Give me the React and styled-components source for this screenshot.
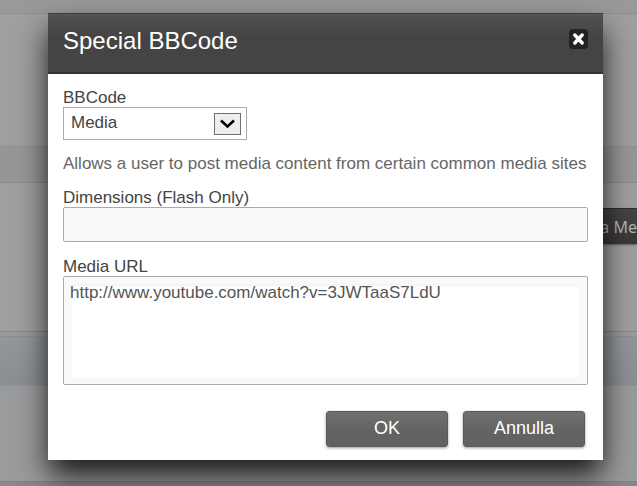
import React, { useState } from 'react'
import styled, { createGlobalStyle } from 'styled-components'

const GlobalStyle = createGlobalStyle`
    * {
        box-sizing: border-box;
    }
    body {
        margin: 0;
        font-family: "Liberation Sans", Arial, sans-serif;
        font-size: 17px;
        line-height: 18px;
        color: #444;
    }
`
const Screen = styled.div`
    display: grid;
    min-height: 100vh;
    overflow: hidden;
    background-color: #8a8888;
`
const Page = styled.div`
    grid-area: 1 / 1;
    min-width: 0;
`
const Band = styled.div`
    height: ${props => props.$height}px;
    background: ${props => props.$color};
    border-bottom: 1px solid ${props => props.$line};
`
const PageActions = styled.div`
    display: flex;
    justify-content: flex-end;
    padding-top: 25px;
`
const PageButton = styled.button`
    height: 36px;
    padding: 0 0 0 12px;
    border: none;
    border-top: 1px solid #2c2c2c;
    background: linear-gradient(#444, #383838);
    box-shadow: 0 1px 2px rgba(0, 0, 0, 0.4);
    color: #b4b4b4;
    font-family: "Noto Sans", "DejaVu Sans", sans-serif;
    font-size: 16px;
    white-space: nowrap;
`
const Dialog = styled.form`
    grid-area: 1 / 1;
    align-self: start;
    position: relative;
    min-width: 0;
    margin: 13px 34px 26px 48px;
    background-color: white;
    box-shadow: 0 16px 28px -1px rgba(0, 0, 0, 0.85);
`
const Header = styled.div`
    display: flex;
    align-items: center;
    justify-content: space-between;
    height: 61px;
    padding: 0 15px;
    border-top: 1px solid #383838;
    border-bottom: 2px solid #333;
    background: linear-gradient(#5a5a5a, #505050 2px, #444 24px);
`
const Title = styled.h1`
    margin: 0 0 5px;
    font-size: 24px;
    font-weight: 400;
    line-height: 28px;
    color: white;
`
const CloseButton = styled.button`
    display: flex;
    align-items: center;
    justify-content: center;
    width: 19px;
    height: 20px;
    margin-bottom: 8px;
    padding: 0;
    border: none;
    border-radius: 4px;
    background-color: #222;
`
const Body = styled.div`
    display: flex;
    flex-direction: column;
    padding: 15px 15px 13px;
`
const Field = styled.div`
    display: flex;
    flex-direction: column;
    margin-bottom: ${props => props.$gap}px;
`
const Label = styled.label`
    height: 18px;
`
const SelectWrap = styled.div`
    display: grid;
    align-items: center;
    width: 184px;
`
const Select = styled.select`
    grid-area: 1 / 1;
    height: 33px;
    padding: 0 32px 2px 7px;
    border: 1px solid #aaa;
    border-radius: 0;
    background-color: white;
    color: #444;
    font-family: inherit;
    font-size: 17px;
    appearance: none;
`
const Arrow = styled.span`
    grid-area: 1 / 1;
    justify-self: end;
    display: flex;
    align-items: center;
    justify-content: center;
    width: 27px;
    height: 22px;
    margin-right: 6px;
    border: 1px solid #707070;
    background-color: #eee;
    pointer-events: none;
`
const Hint = styled.p`
    margin: 0 0 16px;
    color: #666;
`
const Input = styled.input`
    width: 100%;
    height: 35px;
    padding: 0 6px;
    border: 1px solid #aaa;
    border-radius: 2px;
    background-color: #f9f9f9;
    color: #555;
    font-family: inherit;
    font-size: 17px;
`
const TextArea = styled.textarea`
    display: block;
    width: 100%;
    height: 109px;
    padding: 7px 6px;
    border: 1px solid #aaa;
    border-radius: 2px;
    background: linear-gradient(#f2f2f2, #fff 4px) center / calc(100% - 16px) calc(100% - 14px) no-repeat #f9f9f9;
    color: #555;
    font-family: inherit;
    font-size: 17px;
    line-height: 18px;
    resize: none;
`
const Footer = styled.div`
    display: flex;
    justify-content: flex-end;
    gap: 15px;
    padding-right: 3px;
`
const Button = styled.button`
    width: 122px;
    height: 36px;
    padding: 0 0 2px;
    border: 1px solid #5a5a5a;
    border-radius: 3px;
    background: linear-gradient(#707070, #626262 60%);
    box-shadow: 0 1px 3px rgba(0, 0, 0, 0.4);
    color: white;
    font-family: inherit;
    font-size: 18px;
`

const App = () => {
  const [url, setUrl] = useState('http://www.youtube.com/watch?v=3JWTaaS7LdU')

  return (
    <Screen>
        <GlobalStyle/>
        <Page>
            <Band $height={14} $color='#999' $line='#8f8f8f'/>
            <Band $height={133} $color='#9f9f9f' $line='#8f8f8f'/>
            <Band $height={36} $color='#969696' $line='#8c8c8c'/>
            <Band $height={149} $color='#9f9f9f' $line='#848484'>
                <PageActions>
                    <PageButton type='button'>a Me</PageButton>
                </PageActions>
            </Band>
            <Band $height={5} $color='#999b9c' $line='#8b9093'/>
            <Band $height={49} $color='linear-gradient(#92979a, #8b8e92)' $line='#939393'/>
            <Band $height={96} $color='#9a9b9c' $line='#808080'/>
        </Page>
        <Dialog onSubmit={e => e.preventDefault()}>
            <Header>
                <Title>Special BBCode</Title>
                <CloseButton type='button' aria-label='Chiudi'>
                    <svg width='13' height='14' viewBox='0 0 13 14'>
                        <path d='M2.8 3L10.2 11M10.2 3L2.8 11' stroke='white' strokeWidth='3.4' strokeLinecap='round'/>
                    </svg>
                </CloseButton>
            </Header>
            <Body>
                <Field $gap={15}>
                    <Label htmlFor='bbcode'>BBCode</Label>
                    <SelectWrap>
                        <Select id='bbcode'>
                            <option>Media</option>
                        </Select>
                        <Arrow>
                            <svg width='15' height='10' viewBox='0 0 15 10'>
                                <path d='M1 1.5L7.5 7.5L14 1.5' fill='none' stroke='black' strokeWidth='2.6'/>
                            </svg>
                        </Arrow>
                    </SelectWrap>
                </Field>
                <Hint>Allows a user to post media content from certain common media sites</Hint>
                <Field $gap={16}>
                    <Label htmlFor='dimensions'>Dimensions (Flash Only)</Label>
                    <Input id='dimensions' type='text'/>
                </Field>
                <Field $gap={26}>
                    <Label htmlFor='url'>Media URL</Label>
                    <TextArea id='url' spellCheck={false} value={url} onChange={e => setUrl(e.target.value)}/>
                </Field>
                <Footer>
                    <Button type='submit'>OK</Button>
                    <Button type='button'>Annulla</Button>
                </Footer>
            </Body>
        </Dialog>
    </Screen>
  )
}

export default App
